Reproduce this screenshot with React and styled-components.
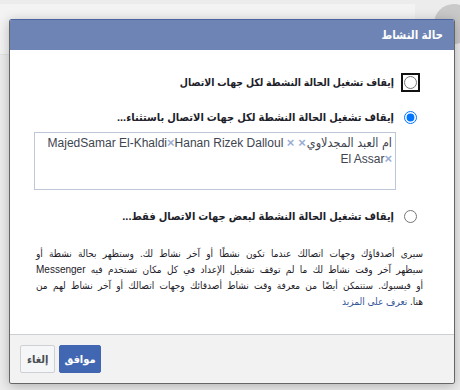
import React from "react";
import styled, { createGlobalStyle } from "styled-components";

const Global = createGlobalStyle`
  html, body {
    margin: 0;
    padding: 0;
  }
  body {
    font-family: Tahoma, "Liberation Sans", "DejaVu Sans Condensed", "DejaVu Sans", sans-serif;
    background: #ececec;
  }
`;

const Page = styled.div`
  position: relative;
  width: 460px;
  height: 390px;
  overflow: hidden;
  background: #ececec;
`;

/* faded page behind the modal */
const Backdrop = styled.div`
  display: flex;
  justify-content: space-between;
  align-items: flex-start;
  padding-top: 4px;
`;

const BackCard = styled.div`
  width: 415px;
  height: 50px;
  background: #f3f3f3;
  border-radius: 0 0 14px 0;
  border-bottom: 1px solid #e2e2e2;
`;

const Avatar = styled.div`
  width: 40px;
  height: 40px;
  margin-right: -14px;
  border-radius: 50%;
  background: #c9c9c9;
`;

const Dialog = styled.div`
  position: absolute;
  top: 19px;
  left: 9px;
  width: 444px;
  border: 1px solid rgba(0, 0, 0, 0.6);
  border-top: 0;
  border-radius: 3px;
  overflow: hidden;
  box-shadow: 0 2px 12px rgba(0, 0, 0, 0.25);
  background: #fff;
  direction: rtl;
`;

const Header = styled.div`
  height: 30px;
  display: flex;
  align-items: center;
  padding: 0 11px;
  background: #6d84b4;
  border-top: 1px solid #4a64a0;
  color: #fff;
  font-size: 11.5px;
  font-weight: bold;
`;

const Body = styled.div`
  padding: 22px 31px 24px 26px;
  display: flex;
  flex-direction: column;
`;

const Option = styled.label`
  display: flex;
  align-items: center;
  gap: 10px;
  height: 20px;
  margin-top: ${(p) => p.$gap || 0}px;
  padding-right: 6px;
  font-size: ${(p) => p.$size || 11}px;
  font-weight: bold;
  color: #1d2129;
`;

const Radio = styled.input.attrs({ type: "radio", name: "active" })`
  width: 13px;
  height: 13px;
  margin: 0;
  accent-color: #0075ff;
  ${(p) =>
    p.$focused &&
    `
    outline: 2px solid #111;
    outline-offset: 1px;
    border-radius: 50%;
  `}
`;

const TokenBox = styled.div`
  margin: 5px 27px 0 -2px;
  height: 52px;
  padding: 2px 3px;
  border: 1px solid #bdc7d8;
  font-size: 12px;
  line-height: 16px;
  color: #3e4450;
  text-align: right;
`;

const Token = styled.span`
  unicode-bidi: isolate;
  direction: ${(p) => p.$dir || "ltr"};
  font-size: ${(p) => (p.$dir === "rtl" ? 12.5 : 12)}px;
`;

const Remove = styled.span`
  color: #9aaed4;
  font-weight: bold;
  font-size: 13px;
  margin: ${(p) => p.$m || "0"};
`;

const Info = styled.div`
  margin-top: 20px;
  font-size: 10px;
  line-height: 16px;
  color: #1d2129;
`;

const InfoLine = styled.div`
  white-space: nowrap;
  text-align: right;
  text-align-last: ${(p) => (p.$last ? "right" : "justify")};
`;

const More = styled.a`
  color: #365899;
  text-decoration: none;
`;

const Footer = styled.div`
  height: 48px;
  display: flex;
  flex-direction: row-reverse;
  align-items: center;
  gap: 4px;
  padding: 0 10px;
  background: #f2f2f2;
  border-top: 1px solid #ccd0d5;
`;

const Button = styled.button`
  height: 28px;
  padding: 0 ${(p) => (p.$primary ? 4 : 6)}px;
  border-radius: 2px;
  border: 1px solid ${(p) => (p.$primary ? "#4267b2" : "#ced0d4")};
  background: ${(p) => (p.$primary ? "#4267b2" : "#f5f6f7")};
  color: ${(p) => (p.$primary ? "#fff" : "#4b4f56")};
  font-family: inherit;
  font-size: 11px;
  font-weight: bold;
`;

const infoLines = [
  "سيرى أصدقاؤك وجهات اتصالك عندما تكون نشطًا أو آخر نشاط لك. وستظهر بحالة نشطة أو",
  "سيظهر آخر وقت نشاط لك ما لم توقف تشغيل الإعداد في كل مكان تستخدم فيه Messenger",
  "أو فيسبوك. ستتمكن أيضًا من معرفة وقت نشاط أصدقائك وجهات اتصالك أو آخر نشاط لهم من",
];

export default function App() {
  return (
    <Page>
      <Global />
      <Backdrop>
        <BackCard />
        <Avatar />
      </Backdrop>
      <Dialog>
        <Header>حالة النشاط</Header>
        <Body>
          <Option $size={10.4}>
            <Radio $focused />
            إيقاف تشغيل الحالة النشطة لكل جهات الاتصال
          </Option>
          <Option $gap={15}>
            <Radio defaultChecked />
            إيقاف تشغيل الحالة النشطة لكل جهات الاتصال باستثناء...
          </Option>
          <TokenBox>
            <Token $dir="rtl">
              ام العبد المجدلاوي<Remove $m="0 1px 0 4px">×</Remove>
            </Token>
            <Token>
              Hanan Rizek Dalloul <Remove>×</Remove>
            </Token>
            <Token>
              Samar El-Khaldi<Remove>×</Remove>
            </Token>
            <Token>
              Majed
              <br />
              El Assar<Remove>×</Remove>
            </Token>
          </TokenBox>
          <Option $gap={16}>
            <Radio />
            إيقاف تشغيل الحالة النشطة لبعض جهات الاتصال فقط...
          </Option>
          <Info>
            {infoLines.map((line) => (
              <InfoLine key={line}>{line}</InfoLine>
            ))}
            <InfoLine $last>
              هنا. <More href="#">تعرف على المزيد</More>
            </InfoLine>
          </Info>
        </Body>
        <Footer>
          <Button>إلغاء</Button>
          <Button $primary>موافق</Button>
        </Footer>
      </Dialog>
    </Page>
  );
}
